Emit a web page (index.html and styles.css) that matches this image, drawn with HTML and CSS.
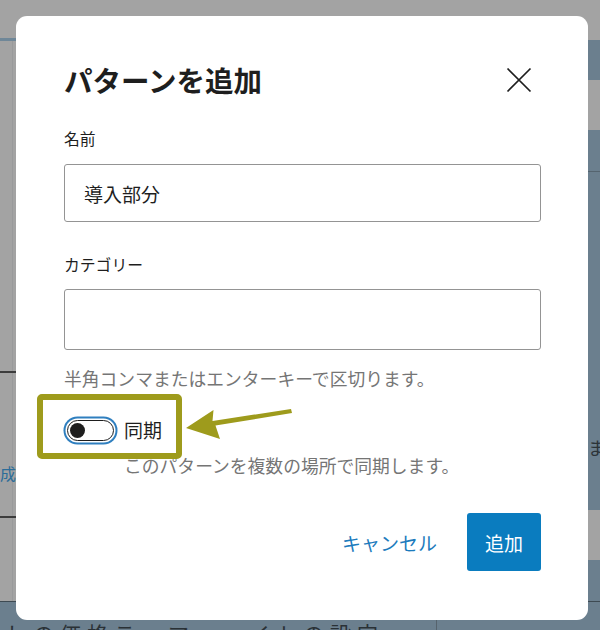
FILE: index.html
```html
<!DOCTYPE html>
<html lang="ja">
<head>
<meta charset="utf-8">
<title>パターンを追加</title>
<link rel="stylesheet" href="styles.css">
</head>
<body>
<div class="backdrop" aria-hidden="true">
  <div class="bd bd-top-line"></div>
  <div class="bd bd-left-vline"></div>
  <div class="bd bd-left-line1"></div>
  <div class="bd bd-left-line2"></div>
  <div class="bd bd-left-text">作成</div>
  <div class="bd bd-right-a"></div>
  <div class="bd bd-right-b"><span class="bd-right-rule"></span><span class="bd-right-text">ます</span></div>
  <div class="bd bd-right-c"></div>
  <div class="bd bd-bottom"><span class="bd-bottom-text">しの価格テーマーーイトの設定</span><span class="bd-bottom-rule"></span></div>
</div>

<div class="page">
  <div class="modal" role="dialog" aria-label="パターンを追加">
    <div class="modal-header">
      <h1 class="title">パターンを追加</h1>
      <button class="close" aria-label="閉じる">
        <svg width="32" height="32" viewBox="0 0 32 32"><path d="M4.5 4.5 L27.5 27.5 M27.5 4.5 L4.5 27.5" stroke="#1e1e1e" stroke-width="1.7" fill="none"/></svg>
      </button>
    </div>

    <div class="field-label label-name">名前</div>
    <div class="input input-name">導入部分</div>

    <div class="field-label label-cat">カテゴリー</div>
    <div class="input input-cat"></div>
    <p class="help help-cat">半角コンマまたはエンターキーで区切ります。</p>

    <div class="toggle-row">
      <span class="toggle"><span class="knob"></span></span>
      <span class="toggle-label">同期</span>
      <span class="highlight"></span>
    </div>
    <p class="help help-sync">このパターンを複数の場所で同期します。</p>

    <div class="footer">
      <button class="btn-link">キャンセル</button>
      <button class="btn-primary">追加</button>
    </div>
  </div>
</div>

<svg class="arrow" width="600" height="630" viewBox="0 0 600 630" aria-hidden="true">
  <polygon points="186,428 213.5,410 212.5,421 291,409 292,413 215.5,425.5 220,439" fill="#9e9b1c"/>
</svg>
</body>
</html>
```

FILE: styles.css
```css
html, body {
  margin: 0;
  padding: 0;
}

body {
  width: 600px;
  height: 630px;
  overflow: hidden;
  position: relative;
  background: #a3a3a3;
  font-family: "Noto Sans CJK JP", "Noto Sans", sans-serif;
  color: #1e1e1e;
}

/* underlying page, dimmed by overlay */
.backdrop {
  position: absolute;
  inset: 0;
}

.bd {
  position: absolute;
}

.bd-top-line {
  left: 0;
  top: 38px;
  width: 20px;
  height: 3px;
  background: #6f8798;
}

.bd-left-vline {
  left: 12px;
  top: 41px;
  width: 1px;
  height: 560px;
  background: #999a9b;
}

.bd-left-line1 {
  left: 0;
  top: 371px;
  width: 20px;
  height: 2px;
  background: #3c3c3c;
}

.bd-left-line2 {
  left: 0;
  top: 516px;
  width: 20px;
  height: 2px;
  background: #3c3c3c;
}

.bd-left-text {
  left: -16px;
  top: 460px;
  font-size: 16px;
  line-height: 26px;
  color: #2c6d99;
}

.bd-right-a {
  left: 580px;
  top: 40px;
  width: 20px;
  height: 40px;
  background: #6b7f8e;
}

.bd-right-b {
  left: 580px;
  top: 130px;
  width: 20px;
  height: 380px;
  background: #6b7f8e;
}

.bd-right-rule {
  position: absolute;
  left: 0;
  top: 41px;
  width: 20px;
  height: 1px;
  background: #55646f;
}

.bd-right-text {
  position: absolute;
  left: 8px;
  top: 304px;
  font-size: 18px;
  line-height: 26px;
  color: #2b3338;
  white-space: nowrap;
}

.bd-right-c {
  left: 580px;
  top: 560px;
  width: 20px;
  height: 70px;
  background: #6b7f8e;
}

.bd-bottom {
  left: 0;
  top: 601px;
  width: 600px;
  height: 29px;
  background: #6b7f8e;
  border-top: 1px solid #3e4a52;
}

.bd-bottom-text {
  position: absolute;
  left: 6px;
  top: 16px;
  font-size: 21px;
  line-height: 30px;
  letter-spacing: 6px;
  color: #2a3136;
  white-space: nowrap;
}

.bd-bottom-rule {
  position: absolute;
  left: 436px;
  top: 0;
  width: 1px;
  height: 29px;
  background: #56636d;
}

/* dialog */
.page {
  position: relative;
  padding: 16px 12px 10px 16px;
}

.modal {
  width: 572px;
  height: 604px;
  box-sizing: border-box;
  background: #fff;
  border-radius: 11px;
  padding: 0 47px 0 48px;
  display: flex;
  flex-direction: column;
}

.modal-header {
  display: flex;
  align-items: center;
  justify-content: space-between;
  padding-top: 44px;
  height: 40px;
}

.title {
  margin: 0;
  font-size: 28.5px;
  line-height: 40px;
  font-weight: 700;
  color: #1e1e1e;
}

.close {
  width: 32px;
  height: 32px;
  padding: 0;
  margin-right: 6px;
  border: 0;
  background: transparent;
  display: flex;
  align-items: center;
  justify-content: center;
}

.field-label {
  font-size: 15.8px;
  line-height: 22px;
  color: #1e1e1e;
}

.label-name {
  margin-top: 28px;
}

.label-cat {
  margin-top: 32px;
}

.input {
  box-sizing: border-box;
  border: 1px solid #949494;
  border-radius: 3px;
  padding: 0 19px;
  display: flex;
  align-items: center;
  font-size: 19px;
  color: #1e1e1e;
}

.input-name {
  margin-top: 14px;
  height: 58px;
}

.input-cat {
  margin-top: 13px;
  height: 61px;
}

.help {
  margin: 0;
  font-size: 17.8px;
  line-height: 24px;
  color: #757575;
}

.help-cat {
  margin-top: 16px;
}

.toggle-row {
  position: relative;
  margin-top: 26px;
  height: 28px;
  display: flex;
  align-items: center;
  gap: 10px;
  padding-left: 0;
}

.toggle {
  box-sizing: border-box;
  width: 47px;
  height: 21px;
  margin-left: 3px;
  border: 1.5px solid #1e1e1e;
  border-radius: 11px;
  background: #fff;
  box-shadow: 0 0 0 1.5px #fff, 0 0 0 3.5px #2f7fbf;
  display: flex;
  align-items: center;
  padding-left: 2px;
}

.knob {
  width: 15px;
  height: 15px;
  border-radius: 50%;
  background: #1e1e1e;
}

.toggle-label {
  font-size: 19px;
  line-height: 28px;
  color: #1e1e1e;
}

.highlight {
  position: absolute;
  left: -27px;
  top: -22px;
  width: 145px;
  height: 65px;
  box-sizing: border-box;
  border: 6px solid #9e9b1c;
  border-radius: 5px;
  pointer-events: none;
}

.help-sync {
  margin-top: 9px;
  padding-left: 60px;
}

.footer {
  margin-top: 36px;
  display: flex;
  justify-content: flex-end;
  align-items: center;
  gap: 18px;
}

.btn-link {
  border: 0;
  background: transparent;
  padding: 0 12px;
  height: 58px;
  font-family: inherit;
  font-size: 19px;
  color: #1c7bbd;
}

.btn-primary {
  border: 0;
  border-radius: 3px;
  background: #0a7cbf;
  color: #fff;
  height: 58px;
  width: 74px;
  padding: 0;
  font-family: inherit;
  font-size: 19px;
}

.arrow {
  position: absolute;
  left: 0;
  top: 0;
  pointer-events: none;
}
```
